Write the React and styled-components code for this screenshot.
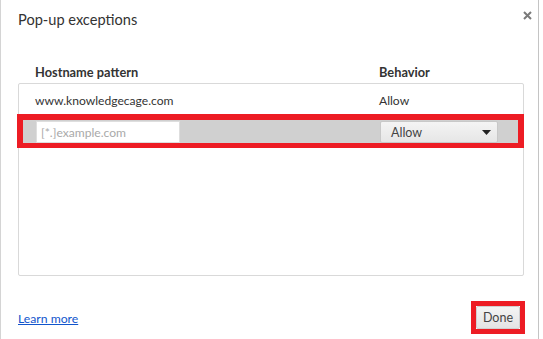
import React from "react";
import styled, { createGlobalStyle } from "styled-components";

const Global = createGlobalStyle`
  html, body { margin: 0; padding: 0; background: #ffffff; }
  body { font-family: Lato, "Open Sans", Arial, sans-serif; color: #333; }
  * { box-sizing: border-box; }
`;

const Page = styled.div`
  display: flex;
  height: 339px;
  width: 543px;
  overflow: hidden;
  background: #fff;
`;

const Backdrop = styled.div`
  width: 1px;
  background: #d4d4d4;
`;

const Dialog = styled.div`
  width: 538px;
  display: flex;
  flex-direction: column;
  border-right: 1px solid #c4c4c4;
  background: #fff;
`;

const TitleBar = styled.div`
  height: 40px;
  display: flex;
  justify-content: space-between;
  align-items: flex-start;
  padding: 10px 0 0 17px;
`;

const Title = styled.h1`
  margin: 0;
  font-size: 14.6px;
  font-weight: 400;
  line-height: 20px;
  color: #333;
`;

const CloseButton = styled.button`
  border: 0;
  background: none;
  padding: 0;
  margin: 0 6px 0 0;
  width: 10px;
  height: 10px;
  display: flex;
  align-items: center;
  justify-content: center;
`;

const Body = styled.div`
  padding: 0 14px 0 17px;
  display: flex;
  flex-direction: column;
`;

const HeaderRow = styled.div`
  height: 43px;
  display: grid;
  grid-template-columns: 344px 1fr;
  align-items: end;
  padding: 0 0 3px 17px;
  font-size: 12.8px;
  font-weight: 700;
  line-height: 16px;
  color: #333;
`;

const ListBox = styled.div`
  height: 193px;
  border: 1px solid #d9d9d9;
  border-radius: 2px;
  display: flex;
  flex-direction: column;
`;

const Row = styled.div`
  height: 30px;
  display: grid;
  grid-template-columns: 344px 1fr;
  align-items: center;
  padding: 4px 0 0 16px;
  font-size: 12.1px;
  line-height: 16px;
  color: #333;
`;

const EditRow = styled.div`
  margin: 0 -1px 0 -2px;
  height: 34px;
  border: 6px solid #ed1c24;
  border-bottom-width: 5px;
  background: #d0d0d0;
  display: flex;
  align-items: flex-start;
  padding: 1px 0 0 13px;
`;

const PatternInput = styled.input`
  width: 144px;
  height: 22px;
  border: 1px solid #dedede;
  background: #fff;
  padding: 0 4px;
  font-family: inherit;
  font-size: 12.1px;
  color: #333;
  outline: none;
  &::placeholder { color: #a9a9a9; }
`;

const Select = styled.div`
  margin-left: 200px;
  width: 118px;
  height: 22px;
  border: 1px solid #c8c8c8;
  border-radius: 2px;
  background: linear-gradient(#f4f4f4, #e6e6e6);
  display: flex;
  align-items: center;
  justify-content: space-between;
  padding: 0 6px 0 10px;
  font-size: 12.5px;
  color: #444;
`;

const Footer = styled.div`
  flex: 1;
  display: flex;
  justify-content: space-between;
  align-items: center;
  padding: 19px 13px 0 17px;
`;

const LearnMore = styled.a`
  margin-top: 3px;
  font-size: 12.2px;
  color: #1155cc;
  text-decoration: underline;
  cursor: pointer;
`;

const DoneFrame = styled.div`
  border: 5px solid #ed1c24;
  display: flex;
`;

const DoneButton = styled.button`
  width: 44px;
  height: 23px;
  border: 1px solid #d0d0d0;
  border-radius: 2px;
  background: linear-gradient(#f4f4f4, #e4e4e4);
  font-family: inherit;
  font-size: 12.5px;
  color: #444;
  padding: 0;
`;

export default function App() {
  return (
    <>
      <Global />
      <Page>
        <Backdrop />
        <Dialog>
          <TitleBar>
            <Title>Pop-up exceptions</Title>
            <CloseButton aria-label="Close">
              <svg width="9" height="9" viewBox="0 0 9 9">
                <path d="M1 1 L8 8 M8 1 L1 8" stroke="#7a7a7a" strokeWidth="2" />
              </svg>
            </CloseButton>
          </TitleBar>
          <Body>
            <HeaderRow>
              <span>Hostname pattern</span>
              <span>Behavior</span>
            </HeaderRow>
            <ListBox>
              <Row>
                <span>www.knowledgecage.com</span>
                <span>Allow</span>
              </Row>
              <EditRow>
                <PatternInput placeholder="[*.]example.com" />
                <Select>
                  <span>Allow</span>
                  <svg width="9" height="5" viewBox="0 0 9 5">
                    <path d="M0 0 H9 L4.5 5 Z" fill="#222" />
                  </svg>
                </Select>
              </EditRow>
            </ListBox>
          </Body>
          <Footer>
            <LearnMore>Learn more</LearnMore>
            <DoneFrame>
              <DoneButton>Done</DoneButton>
            </DoneFrame>
          </Footer>
        </Dialog>
      </Page>
    </>
  );
}
